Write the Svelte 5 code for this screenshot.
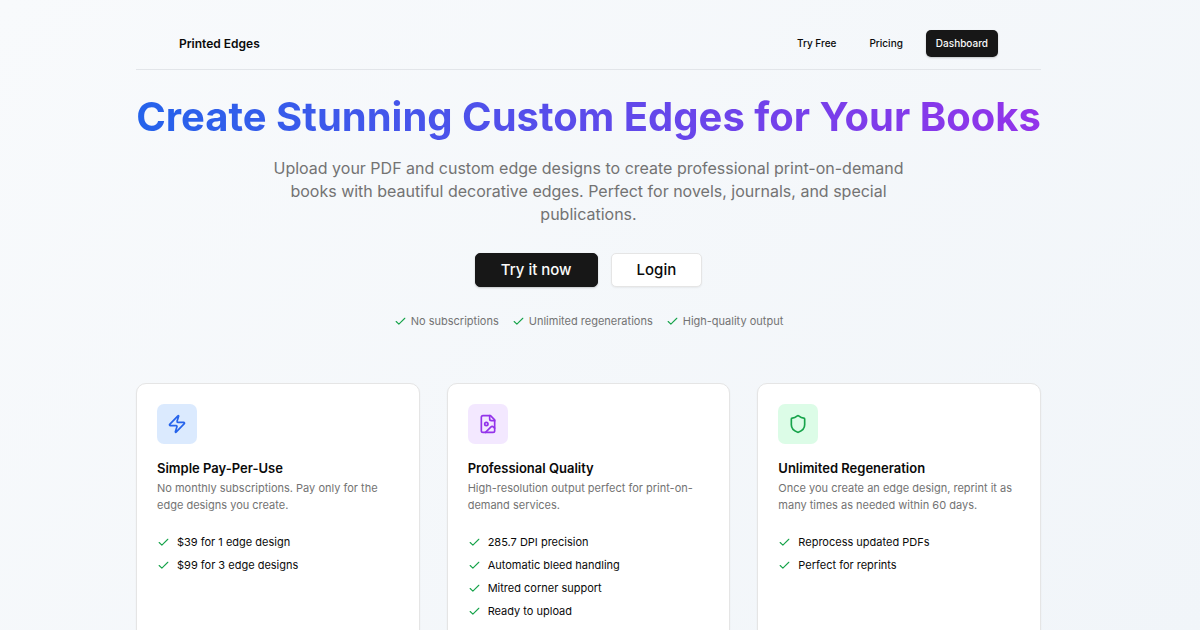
<script>
  const perks = ['No subscriptions', 'Unlimited regenerations', 'High-quality output'];
  const features = [
    {
      icon: 'bolt',
      title: 'Simple Pay-Per-Use',
      text: 'No monthly subscriptions. Pay only for the edge designs you create.',
      points: ['$39 for 1 edge design', '$99 for 3 edge designs']
    },
    {
      icon: 'image',
      title: 'Professional Quality',
      text: 'High-resolution output perfect for print-on-demand services.',
      points: ['285.7 DPI precision', 'Automatic bleed handling', 'Mitred corner support', 'Ready to upload']
    },
    {
      icon: 'shield',
      title: 'Unlimited Regeneration',
      text: 'Once you create an edge design, reprint it as many times as needed within 60 days.',
      points: ['Reprocess updated PDFs', 'Perfect for reprints']
    }
  ];
</script>

{#snippet check()}
  <svg class="check" viewBox="0 0 24 24" aria-hidden="true"><path d="M20 6 9 17l-5-5" /></svg>
{/snippet}

<div class="page">
  <div class="container">
    <header>
      <a class="brand" href="#home">Printed Edges</a>
      <nav>
        <a class="link" href="#try">Try Free</a>
        <a class="link" href="#pricing">Pricing</a>
        <a class="link solid" href="#dashboard">Dashboard</a>
      </nav>
    </header>

    <main>
      <section class="hero">
        <h1>Create Stunning Custom Edges for Your Books</h1>
        <p class="lead">
          Upload your PDF and custom edge designs to create professional print-on-demand books with
          beautiful decorative edges. Perfect for novels, journals, and special publications.
        </p>
        <div class="actions">
          <button class="primary" type="button">Try it now</button>
          <button type="button">Login</button>
        </div>
        <ul class="perks">
          {#each perks as perk}
            <li>{@render check()}{perk}</li>
          {/each}
        </ul>
      </section>

      <section class="cards">
        {#each features as feature}
          <article>
            <div class="tile {feature.icon}">
              <svg viewBox="0 0 24 24" aria-hidden="true">
                {#if feature.icon === 'bolt'}
                  <path d="M4 14a1 1 0 0 1-.78-1.63l9.9-10.2a.5.5 0 0 1 .86.46l-1.92 6.02A1 1 0 0 0 13 10h7a1 1 0 0 1 .78 1.63l-9.9 10.2a.5.5 0 0 1-.86-.46l1.92-6.02A1 1 0 0 0 11 14z" />
                {:else if feature.icon === 'image'}
                  <path d="M15 2H6a2 2 0 0 0-2 2v16a2 2 0 0 0 2 2h12a2 2 0 0 0 2-2V7Z" />
                  <path d="M14 2v4a2 2 0 0 0 2 2h4" />
                  <circle cx="10" cy="12" r="2" />
                  <path d="m20 17-1.296-1.296a2.41 2.41 0 0 0-3.408 0L9 22" />
                {:else}
                  <path d="M20 13c0 5-3.5 7.5-7.66 8.95a1 1 0 0 1-.67-.01C7.5 20.5 4 18 4 13V6a1 1 0 0 1 1-1c2 0 4.5-1.2 6.24-2.72a1.17 1.17 0 0 1 1.52 0C14.51 3.81 17 5 19 5a1 1 0 0 1 1 1z" />
                {/if}
              </svg>
            </div>
            <h2>{feature.title}</h2>
            <p>{feature.text}</p>
            <ul>
              {#each feature.points as point}
                <li>{@render check()}{point}</li>
              {/each}
            </ul>
          </article>
        {/each}
      </section>
    </main>
  </div>
</div>

<style>
  :global(body) {
    margin: 0;
    overflow: hidden;
  }
  .page {
    box-sizing: border-box;
    min-height: 100vh;
    padding: 16px 23px 0 0;
    background: linear-gradient(135deg, #f8fafc, #f1f5f9);
    color: #0a0a0a;
    font-family: Inter, 'Liberation Sans', sans-serif;
    font-size: 12px;
    line-height: 17px;
  }
  .container {
    max-width: 905px;
    margin: 0 auto;
  }
  header {
    display: flex;
    align-items: center;
    justify-content: space-between;
    padding: 14px 43px 12px;
    border-bottom: 1px solid #e2e5e9;
  }
  a {
    color: inherit;
    text-decoration: none;
  }
  .brand {
    font-weight: 600;
  }
  nav {
    display: flex;
    gap: 13px;
  }
  .link {
    padding: 5px 10px;
    border-radius: 5px;
    font-size: 10px;
    font-weight: 500;
  }
  .solid {
    background: #171717;
    color: #fafafa;
    box-shadow: 0 1px 2px rgb(0 0 0 / 20%);
  }
  .hero {
    text-align: center;
  }
  h1 {
    margin: 20px 0 0;
    background: linear-gradient(90deg, #2563eb, #9333ea);
    background-clip: text;
    color: transparent;
    font-size: 40px;
    font-weight: 700;
    line-height: 54px;
    white-space: nowrap;
  }
  .lead {
    max-width: 640px;
    margin: 13px auto 0;
    color: #737373;
    font-size: 16px;
    line-height: 23px;
  }
  .actions {
    display: flex;
    justify-content: center;
    gap: 13px;
    margin-top: 27px;
  }
  button {
    padding: 5px 25px;
    border: 1px solid #e5e5e5;
    border-radius: 5px;
    background: #fff;
    color: #0a0a0a;
    box-shadow: 0 1px 2px rgb(0 0 0 / 6%);
    font: 500 15px/22px Inter, 'Liberation Sans', sans-serif;
  }
  .primary {
    border-color: #171717;
    background: #171717;
    color: #fafafa;
    box-shadow: 0 1px 2px rgb(0 0 0 / 20%);
  }
  ul {
    margin: 0;
    padding: 0;
    list-style: none;
  }
  li {
    display: flex;
    align-items: center;
  }
  svg {
    flex: none;
    fill: none;
    stroke: currentColor;
    stroke-width: 2;
    stroke-linecap: round;
    stroke-linejoin: round;
  }
  .check {
    width: 13px;
    height: 13px;
    color: #16a34a;
  }
  .perks {
    display: flex;
    justify-content: center;
    gap: 13px;
    margin-top: 26px;
    color: #737373;
    font-size: 11px;
  }
  .perks li {
    gap: 4px;
  }
  .cards {
    display: grid;
    grid-template-columns: repeat(3, 1fr);
    gap: 27px;
    margin-top: 53px;
  }
  article {
    padding: 20px;
    border: 1px solid #e5e5e5;
    border-radius: 10px;
    background: #fff;
    box-shadow: 0 1px 2px rgb(0 0 0 / 6%);
  }
  .tile {
    display: grid;
    place-items: center;
    width: 40px;
    height: 40px;
    border-radius: 7px;
  }
  .tile svg {
    width: 20px;
    height: 20px;
  }
  .bolt {
    background: #dbeafe;
    color: #2563eb;
  }
  .image {
    background: #f3e8ff;
    color: #9333ea;
  }
  .shield {
    background: #dcfce7;
    color: #16a34a;
  }
  h2 {
    margin: 15px 0 3px;
    font-size: 13px;
    font-weight: 600;
    line-height: 18px;
  }
  article p {
    margin: 0;
    color: #737373;
    font-size: 11px;
  }
  article ul {
    display: grid;
    gap: 6px;
    margin-top: 20px;
    font-size: 11px;
  }
  article li {
    gap: 7px;
  }
</style>
